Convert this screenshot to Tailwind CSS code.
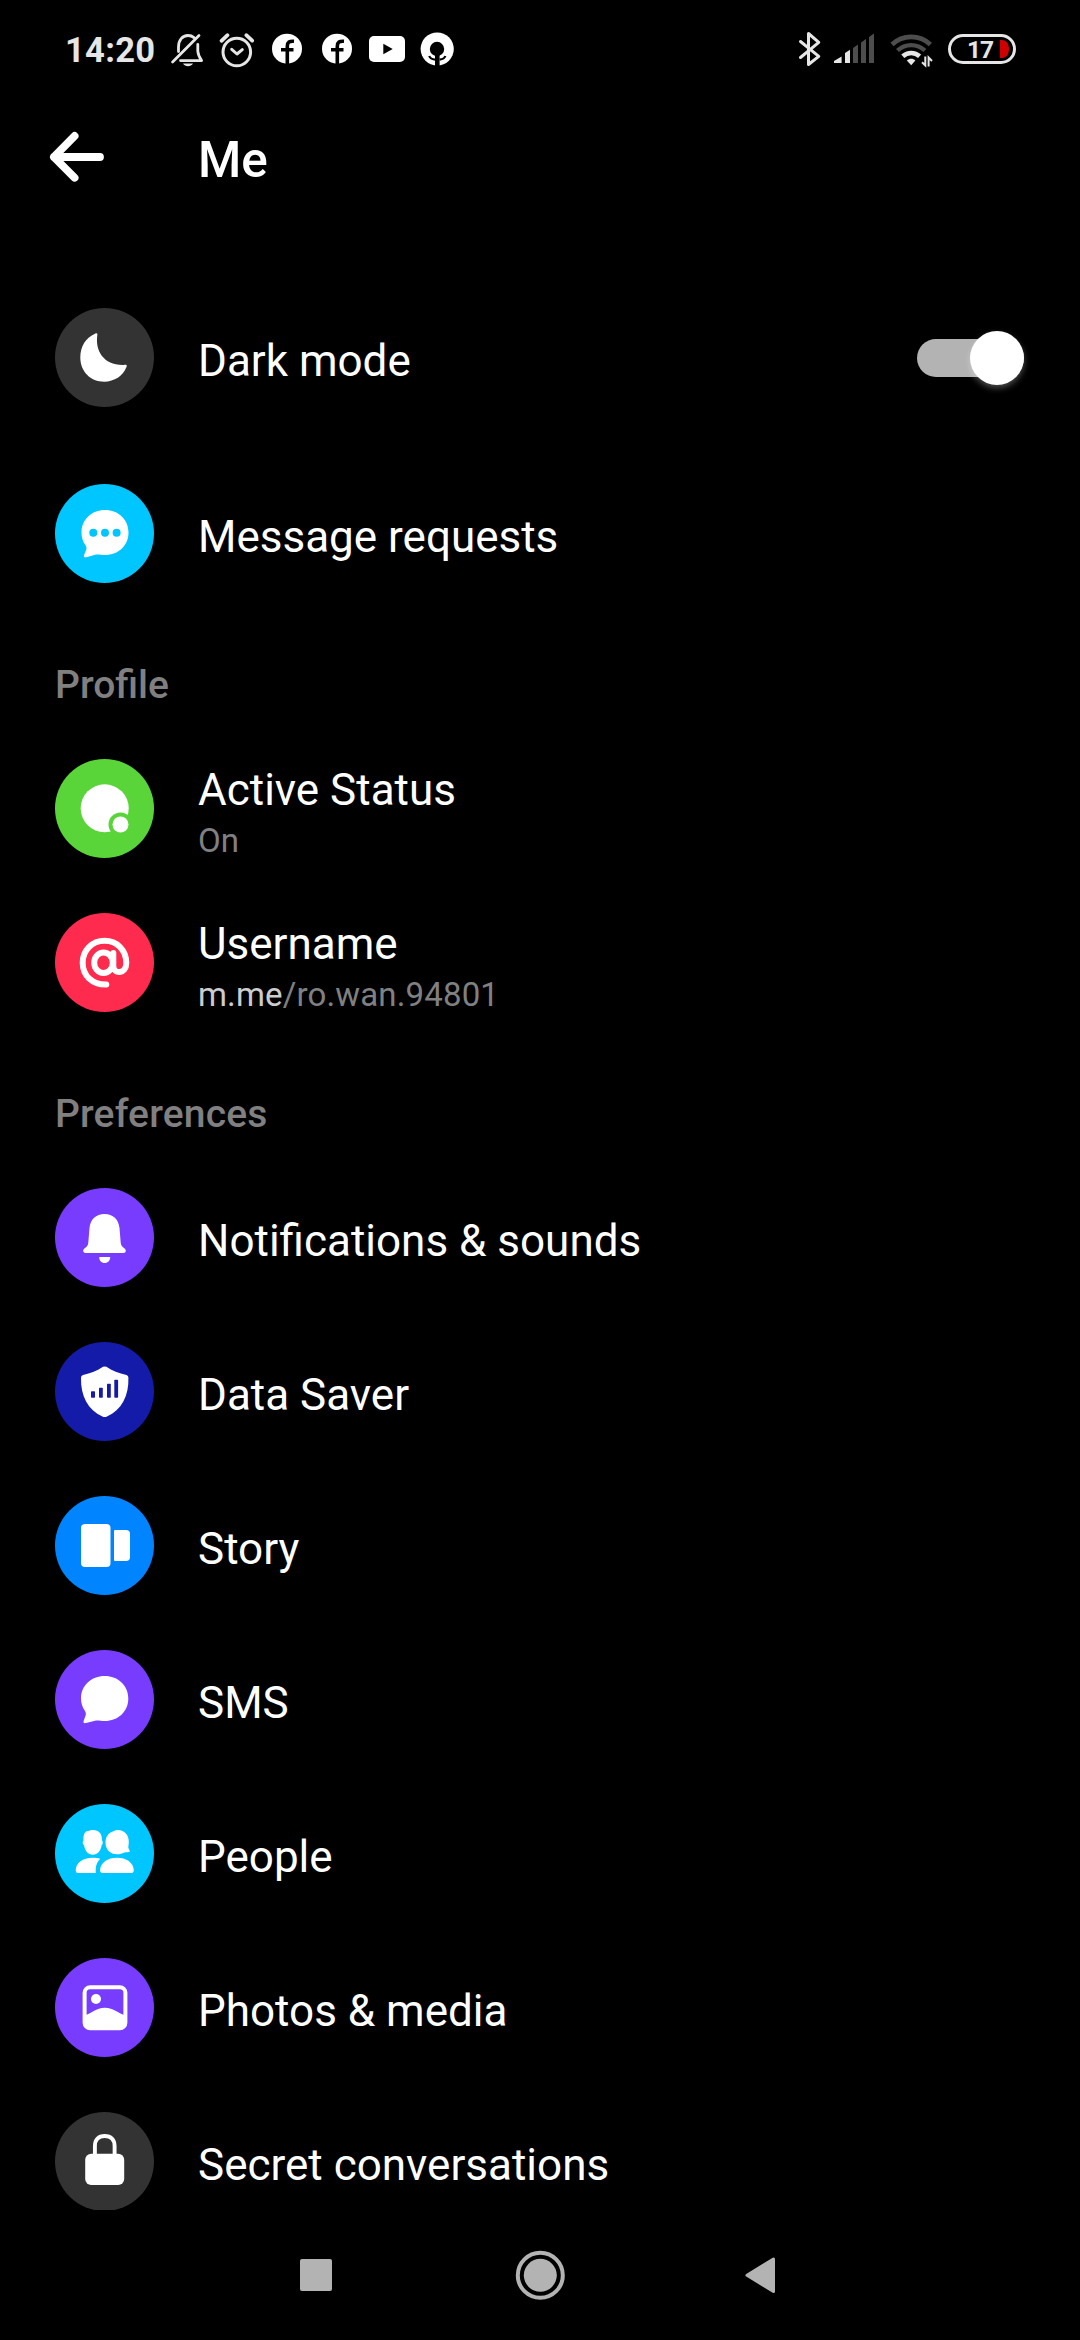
<!DOCTYPE html>
<html lang="en">
<head>
<meta charset="utf-8">
<title>Me</title>
<script src="https://cdn.jsdelivr.net/npm/@tailwindcss/browser@4"></script>
</head>
<body class="bg-black">
<div class="flex h-[2340px] w-[1080px] flex-col overflow-hidden bg-black font-[Roboto,sans-serif] text-white">

  <!-- Status bar -->
  <div class="flex h-[100px] shrink-0 justify-between pt-[10px]">
    <div class="flex pl-[65px]">
      <div class="w-[101px] pt-px text-[34.5px] leading-[79px] font-bold tracking-[0.3px] text-[#e6e6e6]">14:20</div>
      <svg class="h-[80px] w-[48px]" viewBox="166 10 48 80" fill="none" stroke="#e6e6e6" stroke-width="2.8" stroke-linecap="round" stroke-linejoin="round">
        <path d="M172.6 62 199 35.6M178.5 51.500V47C178.500 40 182.500 35.500 188 35.500C190.500 35.500 192.500 36.300 194 37.600M197.800 44.500V51C198 55 199.500 57.500 201.600 60.600H180.500"/>
        <path d="M183 63.500H193C192 65.500 190 66.200 188 66.200S184 65.500 183 63.500Z" fill="#e6e6e6" stroke="none"/>
      </svg>
      <svg class="h-[80px] w-[48px]" viewBox="214 10 48 80" fill="none" stroke="#e6e6e6" stroke-width="3" stroke-linecap="round" stroke-linejoin="round">
        <circle cx="236.800" cy="52" r="13.800"/>
        <path d="M231.700 49.300 237 54 242.300 49.600"/>
        <path stroke-width="3.800" d="M221.500 40.800 227.500 35.200M246.300 35.200 252.200 40.600"/>
      </svg>
      <svg class="h-[80px] w-[50px]" viewBox="262 10 50 80">
        <circle cx="287" cy="48.700" r="15" fill="#fff"/>
        <path d="M287.300 65V46.500C287.300 42 289.500 41 294 41.300M281 49.700H293.500" fill="none" stroke="#000" stroke-width="3.600"/>
      </svg>
      <svg class="h-[80px] w-[50px]" viewBox="312 10 50 80">
        <circle cx="337" cy="48.700" r="15" fill="#fff"/>
        <path d="M337.300 65V46.500C337.300 42 339.500 41 344 41.300M331 49.700H343.500" fill="none" stroke="#000" stroke-width="3.600"/>
      </svg>
      <svg class="h-[80px] w-[50px]" viewBox="362 10 50 80">
        <rect x="369" y="36" width="36" height="26" rx="5" fill="#fff"/>
        <path d="M383.300 43.700V54.300L392.700 49Z"/>
      </svg>
      <svg class="h-[80px] w-[48px]" viewBox="412 10 48 80">
        <circle cx="437.200" cy="49" r="16.600" fill="#fff"/>
        <circle cx="437" cy="49" r="7.200"/>
        <path d="M437.300 55V68" stroke="#000" stroke-width="4.600"/>
        <path d="M429.200 56C430 58.300 431.800 59.200 435 59.700M445.400 56C444.600 58.300 442.800 59.200 439.600 59.700" fill="none" stroke="#000" stroke-width="2.200"/>
      </svg>
    </div>
    <div class="flex pr-[64px]">
      <svg class="h-[80px] w-[36px]" viewBox="794 10 36 80" fill="none" stroke="#e6e6e6" stroke-width="3" stroke-linejoin="round" stroke-linecap="round">
        <path d="M800.500 41.500 818.800 56.300 808.500 64.500V33.500L818.800 42.300 800.500 57.500"/>
      </svg>
      <svg class="h-[80px] w-[54px]" viewBox="830 10 54 80">
        <path fill="#e6e6e6" d="M834 63V61L841.600 56.500V63ZM845 63V53L850 49.800V63Z"/>
        <path fill="#4d4d4d" d="M853 63V48L858 44.500V63ZM861 63V42.500L866 39V63ZM869 63V37L874 33.600V63Z"/>
      </svg>
      <svg class="h-[80px] w-[58px]" viewBox="884 10 58 80" fill="none">
        <path d="M892 44.500A28 28 0 0 1 930.400 44.500" stroke="#4d4d4d" stroke-width="4.600"/>
        <path d="M897.500 50.500A20 20 0 0 1 924.900 50.500" stroke="#4d4d4d" stroke-width="4.300"/>
        <path d="M902.800 56.200A12.500 12.500 0 0 1 919.600 56.200" stroke="#e6e6e6" stroke-width="4.600"/>
        <path d="M906.800 60.500C909.500 58.200 913 58.200 915.400 60.500L911.200 65.200Z" fill="#e6e6e6"/>
        <path d="M925.300 56.500V65.500L922 62.300M928.600 66.500V57.500L932 61" stroke="#e6e6e6" stroke-width="2"/>
      </svg>
      <div class="mt-[24px] ml-[6px] flex h-[30px] w-[68px] items-center justify-end gap-[7px] rounded-full border-[3px] border-[#e6e6e6] pr-[4px]">
        <span class="pt-px text-[24.5px] leading-[24px] font-bold tracking-[-1px] text-[#e6e6e6]">17</span>
        <svg class="h-[18px] w-[9px]" viewBox="0 0 9 18"><path fill="#d00000" d="M0 0H2C6.500 0 9 4.500 9 9S6.500 18 2 18H0Z"/></svg>
      </div>
    </div>
  </div>

  <!-- Title bar -->
  <header class="flex h-[181px] shrink-0 pl-[46px]">
    <svg class="mt-[24px] h-[66px] w-[152px]" viewBox="46 124 152 66" fill="none" stroke="#fff" stroke-width="7.800" stroke-linecap="round" stroke-linejoin="round"><path d="M100 157H54M74.600 136 53.900 157 74.600 177.700"/></svg>
    <h1 class="text-[49.500px] leading-[120px] font-medium">Me</h1>
  </header>

  <main class="flex h-[1929px] shrink-0 flex-col overflow-hidden">
    <div class="flex h-[176px] shrink-0 gap-[44px] pt-[27px] pr-[56px] pl-[55px]">
      <svg class="size-[99px] shrink-0" viewBox="0 0 99 99"><circle cx="49.500" cy="49.500" r="49.500" fill="#333"/><path fill="#fff" d="M40 25.700C42 24.700 42.600 25.300 42.300 27.300C40 43 49 57.500 68.500 57C71 56.500 72.300 56.700 71.600 58.800C68 68 59.500 73.700 49.200 73.700C35.500 73.700 25.300 63.500 25.300 49.500C25.300 38 31 29.700 40 25.700Z"/></svg>
      <div class="grow text-[44px] leading-[106px]">Dark mode</div>
      <div class="mt-[31px] flex h-[38px] w-[107px] items-center justify-end rounded-full bg-[#b3b3b3]">
        <div class="size-[54px] shrink-0 rounded-full bg-white shadow-[0_3px_6px_rgba(255,255,255,0.3)]"></div>
      </div>
    </div>
    <div class="flex h-[176px] shrink-0 gap-[44px] pt-[27px] pl-[55px]">
      <svg class="size-[99px] shrink-0" viewBox="0 0 99 99"><circle cx="49.500" cy="49.500" r="49.500" fill="#00c6ff"/><path fill="#fff" d="M50 26C63.500 26 73.500 35.500 73.500 48.500S63.500 71 50 71C46.500 71 44 70.300 41 70.500L31.500 73.200C29.300 73.700 28.300 73 29.100 71L31.300 65.500C31.800 64 31.300 62.500 30.300 61C27.800 57.500 26.500 53.500 26.500 48.500C26.500 35.500 36.500 26 50 26Z"/><g fill="#00c6ff"><circle cx="38.300" cy="48.700" r="4"/><circle cx="50" cy="48.700" r="4"/><circle cx="61.600" cy="48.700" r="4"/></g></svg>
      <div class="text-[44px] leading-[106px]">Message requests</div>
    </div>

    <h2 class="h-[99px] shrink-0 pt-[22px] pl-[55px] text-[39px] leading-[60px] font-medium text-[#808080]">Profile</h2>
    <div class="flex h-[154px] shrink-0 gap-[44px] pt-[27px] pl-[55px]">
      <svg class="size-[99px] shrink-0" viewBox="0 0 99 99"><circle cx="49.500" cy="49.500" r="49.500" fill="#5ad539"/><circle cx="49.700" cy="49.300" r="24" fill="#fff"/><circle cx="65.500" cy="65.500" r="12" fill="#5ad539"/><circle cx="65.500" cy="65.500" r="8" fill="#fff"/></svg>
      <div>
        <div class="text-[44px] leading-[62px]">Active Status</div>
        <div class="text-[33px] leading-[40px] tracking-[0.15px] text-[#808080]">On</div>
      </div>
    </div>
    <div class="flex h-[154px] shrink-0 gap-[44px] pt-[27px] pl-[55px]">
      <svg class="size-[99px] shrink-0" viewBox="0 0 99 99"><circle cx="49.500" cy="49.500" r="49.500" fill="#ff2b4f"/><g fill="none" stroke="#fff" stroke-linecap="round" stroke-width="6"><ellipse cx="48.500" cy="49.700" rx="9.300" ry="10.300"/><path d="M58.300 40V53C58.300 61.500 71.300 61.500 71.300 50C71.300 37 62 27.800 49.500 27.800S27.700 37.500 27.700 49.700C27.700 62.500 37 71.700 51.300 71.500"/></g></svg>
      <div>
        <div class="text-[44px] leading-[62px]">Username</div>
        <div class="text-[33px] leading-[40px] tracking-[0.15px] text-[#808080]"><span class="text-[#cccccc]">m.me</span>/ro.wan.94801</div>
      </div>
    </div>

    <h2 class="h-[121px] shrink-0 pt-[44px] pl-[55px] text-[39px] leading-[60px] font-medium tracking-[0.15px] text-[#808080]">Preferences</h2>
    <div class="flex h-[154px] shrink-0 gap-[44px] pt-[27px] pl-[55px]">
      <svg class="size-[99px] shrink-0" viewBox="0 0 99 99"><circle cx="49.500" cy="49.500" r="49.500" fill="#783cff"/><path fill="#fff" d="M49.500 26C58 26 63.700 31.500 64.500 40L65.700 54.500C66 57.500 67 58.500 69 60C70.300 61 70.900 62 70.800 63C70.700 64.300 69.800 65 68.300 65H30.700C29.200 65 28.300 64.300 28.200 63C28.100 62 28.700 61 30 60C32 58.500 33 57.500 33.300 54.500L34.500 40C35.300 31.500 41 26 49.500 26ZM44.200 69H55.200C55.200 72.700 53 75 49.700 75S44.200 72.700 44.200 69Z"/></svg>
      <div class="text-[44px] leading-[106px]">Notifications &amp; sounds</div>
    </div>
    <div class="flex h-[154px] shrink-0 gap-[44px] pt-[27px] pl-[55px]">
      <svg class="size-[99px] shrink-0" viewBox="0 0 99 99"><circle cx="49.500" cy="49.500" r="49.500" fill="#141ba9"/><path fill="#fff" d="M48 24.800Q49.700 24 51.400 24.800C57 28.500 64 31.500 71.500 33Q73.400 33.500 73.400 35.500C74 54 66.500 68 52 74.500Q49.700 75.500 47.400 74.500C33 68 25.500 54 26 35.500Q26 33.500 28 33C35.500 31.500 42.400 28.500 48 24.800Z"/><g fill="#141ba9"><rect x="36" y="49.300" width="4" height="6.400" rx=".8"/><rect x="44" y="45.700" width="3.800" height="10" rx=".8"/><rect x="52" y="41.700" width="3.800" height="14" rx=".8"/><rect x="59.300" y="37.700" width="3.800" height="18" rx=".8"/></g></svg>
      <div class="text-[44px] leading-[106px]">Data Saver</div>
    </div>
    <div class="flex h-[154px] shrink-0 gap-[44px] pt-[27px] pl-[55px]">
      <svg class="size-[99px] shrink-0" viewBox="0 0 99 99"><circle cx="49.500" cy="49.500" r="49.500" fill="#0084ff"/><rect x="26" y="28" width="29.500" height="43" rx="4" fill="#fff"/><path fill="#fff" d="M60 34H71Q75 34 75 38V61Q75 65 71 65H60Q59 65 59 64V35Q59 34 60 34Z"/></svg>
      <div class="text-[44px] leading-[106px]">Story</div>
    </div>
    <div class="flex h-[154px] shrink-0 gap-[44px] pt-[27px] pl-[55px]">
      <svg class="size-[99px] shrink-0" viewBox="0 0 99 99"><circle cx="49.500" cy="49.500" r="49.500" fill="#783cff"/><path fill="#fff" d="M49.700 26C63.200 26 73.300 35.500 73.300 48.500S63.200 71 49.700 71C46.200 71 44 70.300 41 70.500L31 73.100C28.900 73.600 28 72.800 28.700 70.800L30.600 65.500C31.100 64 30.900 62.500 30 61C27.500 57.500 26 53.500 26 48.500C26 35.500 36.200 26 49.700 26Z"/></svg>
      <div class="text-[44px] leading-[106px]">SMS</div>
    </div>
    <div class="flex h-[154px] shrink-0 gap-[44px] pt-[27px] pl-[55px]">
      <svg class="size-[99px] shrink-0" viewBox="0 0 99 99"><circle cx="49.500" cy="49.500" r="49.500" fill="#00c6ff"/><path fill="#fff" d="M31.500 27.300C33 27.500 34 26 38 26C44 26 47 29.500 47 36.500C48.300 37.500 47.900 40.500 46.700 41.200C45.700 47 42.500 50.700 37.800 50.700S30 47 29 41.200C27.500 40.500 27.200 37.500 28.500 36.500C28.300 32.500 28.800 29 31.500 27.300ZM56.500 28C58.500 27.500 60 26 63 26C69.500 26.200 73.800 31 73.800 37.500C73.800 40 73.300 42 73.300 43.500C73.300 45 75 46.200 74.800 47.500C74.500 48.500 71.500 48 69.500 48.500C67 49.700 65 50.300 62 50.300C55 50.300 50.500 45.300 50.500 38.500C50.500 33.700 52.500 30 56.500 28ZM23 69Q20.700 69 20.700 66.500C20.700 58.500 28 53.700 37.500 53.700C40.500 53.700 43.200 54 45.200 54.800C42.500 57.500 40.700 61 40.700 65.500V69ZM48 69Q45 69 45 66.200C45.500 58.500 52.500 53.700 62 53.700S78.500 58.500 78.800 66.200Q78.800 69 76 69Z"/></svg>
      <div class="text-[44px] leading-[106px]">People</div>
    </div>
    <div class="flex h-[154px] shrink-0 gap-[44px] pt-[27px] pl-[55px]">
      <svg class="size-[99px] shrink-0" viewBox="0 0 99 99"><circle cx="49.500" cy="49.500" r="49.500" fill="#783cff"/><rect x="29.600" y="29.300" width="40.800" height="41" rx="5.500" fill="none" stroke="#fff" stroke-width="4"/><circle cx="41" cy="41" r="5" fill="#fff"/><path fill="#fff" d="M30 57.300C36 55.500 41 49.700 49.800 49.700S64 55.500 70 57.300V67Q70 70 67 70H33Q30 70 30 67Z"/></svg>
      <div class="text-[44px] leading-[106px]">Photos &amp; media</div>
    </div>
    <div class="flex h-[154px] shrink-0 gap-[44px] pt-[27px] pl-[55px]">
      <svg class="size-[99px] shrink-0" viewBox="0 0 99 99"><circle cx="49.500" cy="49.500" r="49.500" fill="#333"/><rect x="30.200" y="41.700" width="39" height="31.300" rx="6" fill="#fff"/><path d="M39.900 43V34C39.900 27.500 43.500 24 49.700 24S59.600 27.500 59.600 34V43" fill="none" stroke="#fff" stroke-width="3.900"/></svg>
      <div class="text-[44px] leading-[106px]">Secret conversations</div>
    </div>
  </main>

  <!-- System navigation -->
  <nav class="flex h-[130px] shrink-0 items-center justify-between pr-[304px] pl-[300px]">
    <div class="size-[32px] rounded-[2px] bg-[#b3b3b3]"></div>
    <svg class="ml-[4px] size-[50px]" viewBox="0 0 50 50"><circle cx="25.300" cy="25.300" r="22.500" fill="none" stroke="#b3b3b3" stroke-width="4"/><circle cx="25.300" cy="25.300" r="16.500" fill="#b3b3b3"/></svg>
    <svg class="h-[38px] w-[32px]" viewBox="0 0 32 38"><path d="M3 19.300 29.500 3V35.500Z" fill="#b3b3b3" stroke="#b3b3b3" stroke-width="3" stroke-linejoin="round"/></svg>
  </nav>
</div>
</body>
</html>
